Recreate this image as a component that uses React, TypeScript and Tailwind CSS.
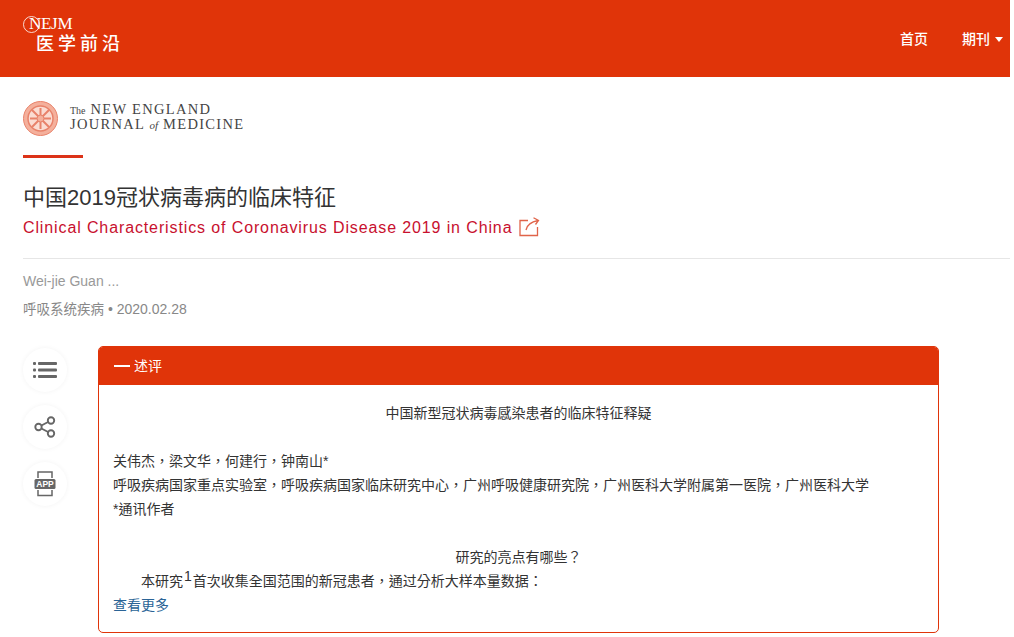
import React from 'react'

const sans = { fontFamily: '"Liberation Sans", "Noto Sans CJK SC", sans-serif' }

function SideButton({ children }: { children: React.ReactNode }) {
  return (
    <div className="w-[44px] h-[44px] rounded-full bg-white shadow-[0_0_5px_rgba(0,0,0,0.05)] flex items-center justify-center text-[#666]">
      {children}
    </div>
  )
}

export default function App() {
  return (
    <div className="w-[1014px] h-[637px] overflow-hidden bg-white text-[#333]" style={sans}>
      <header className="w-[1010px] h-[77px] bg-[#e03409] flex items-center justify-between pl-[23px] pr-[7px] text-white">
        <div className="pb-[11px]">
          <div className="flex items-center h-[18px]">
            <span className="w-[17px] h-[17px] rounded-full border border-white/80 shrink-0"></span>
            <span className="ml-[-11px] text-[17px] leading-[18px] font-['Liberation_Serif'] tracking-[-0.3px]">NEJM</span>
          </div>
          <div className="ml-[13px] text-[18px] leading-[18px] tracking-[4px] font-medium font-['Noto_Sans_CJK_SC']">医学前沿</div>
        </div>
        <nav className="flex items-center text-[14px] font-medium pt-[1px]">
          <span>首页</span>
          <span className="ml-[34px]">期刊</span>
          <span className="ml-[5px] w-0 h-0 border-x-[4.5px] border-x-transparent border-t-[5px] border-t-white"></span>
        </nav>
      </header>

      <main className="w-[1010px] pl-[23px]">
        <div className="flex items-center pt-[24px]">
          <svg width="35" height="35" viewBox="0 0 35 35" fill="none" stroke="#e8826a" className="shrink-0">
            <circle cx="17.5" cy="17.5" r="17" fill="#f4b09c" stroke="#e8826a" />
            <circle cx="17.5" cy="17.5" r="12.5" fill="#fbdcd2" strokeWidth="1.5" />
            <path d="M9 9 L26 26 M26 9 L9 26 M17.5 7 V28 M7 17.5 H28" strokeWidth="2" />
            <circle cx="17.5" cy="17.5" r="3.5" fill="#f4b09c" />
          </svg>
          <div className="ml-[12px] mb-[4px] font-['Liberation_Serif'] text-[#444] text-[14.5px] tracking-[1.3px] whitespace-nowrap">
            <div className="h-[15px] leading-[15px]"><span className="text-[10px] leading-none tracking-normal mr-[5px]">The</span>NEW ENGLAND</div>
            <div className="h-[15px] leading-[15px]">JOURNAL <span className="italic text-[11px] leading-none tracking-normal">of</span> MEDICINE</div>
          </div>
        </div>
        <div className="w-[60px] h-[3px] bg-[#dc3318] mt-[19px]"></div>

        <h1 className="mt-[24px] text-[22px] leading-[32px] text-[#333]">中国2019冠状病毒病的临床特征</h1>
        <div className="flex items-center text-[16px] leading-[26px] text-[#c8102e] mt-[1px]">
          <span className="tracking-[0.88px]">Clinical Characteristics of Coronavirus Disease 2019 in China</span>
          <svg width="22" height="20" viewBox="0 0 22 20" fill="none" stroke="#e0644a" strokeWidth="1.3" className="ml-[6px] mb-[3px]">
            <path d="M10 3.5 H2 V18.5 H19.5 V10" />
            <path d="M8 13 C9 8 12 5 20 3.5 M15.5 0.8 L20.5 3.5 L17.5 7.5" />
          </svg>
        </div>
        <div className="h-px bg-[#e6e6e6] mt-[17px]"></div>
        <div className="mt-[13px] text-[14px] leading-[18px] text-[#999]">Wei-jie Guan ...</div>
        <div className="mt-[10px] text-[14px] leading-[18px] text-[#888]">
          <span className="text-[13.5px]">呼吸系统疾病</span> • 2020.02.28
        </div>

        <div className="flex mt-[27px] items-start">
          <div className="flex flex-col gap-[13px] w-[75px] pt-[2px]">
            <SideButton>
              <svg width="24" height="18" viewBox="0 0 24 18" fill="currentColor">
                <rect x="0" y="1" width="3" height="3" rx="1" />
                <rect x="5" y="1" width="19" height="3" rx="1" />
                <rect x="0" y="7.5" width="3" height="3" rx="1" />
                <rect x="5" y="7.5" width="19" height="3" rx="1" />
                <rect x="0" y="14" width="3" height="3" rx="1" />
                <rect x="5" y="14" width="19" height="3" rx="1" />
              </svg>
            </SideButton>
            <SideButton>
              <svg width="22" height="22" viewBox="0 0 22 22" fill="none" stroke="currentColor" strokeWidth="1.9">
                <circle cx="4.5" cy="11" r="3.2" />
                <circle cx="17" cy="4.5" r="3.2" />
                <circle cx="17" cy="17.5" r="3.2" />
                <path d="M7.4 9.5 L14.1 6 M7.4 12.5 L14.1 16" />
              </svg>
            </SideButton>
            <SideButton>
              <svg width="22" height="26" viewBox="0 0 22 26" fill="none" stroke="currentColor" strokeWidth="1.5">
                <path d="M4 7 V1 H18 V7 M4 19 V24.5 H18 V19" />
                <rect x="0.5" y="8" width="21" height="10" rx="1.5" fill="currentColor" stroke="none" />
                <text x="11" y="16" textAnchor="middle" fontSize="8.5" fontWeight="700" fill="#fff" stroke="none" fontFamily="Liberation Sans">APP</text>
              </svg>
            </SideButton>
          </div>

          <section className="w-[841px] h-[287px] rounded-[5px] border border-[#e03409] overflow-hidden">
            <div className="h-[38px] bg-[#e03409] flex items-center pl-[15px] text-white text-[14px]">
              <span className="w-[16px] h-[2px] bg-white mr-[4px]"></span>
              <span>述评</span>
            </div>
            <div className="px-[14px] text-[14px] leading-[24px] text-[#333] font-['Liberation_Sans','Noto_Sans_CJK_TC',sans-serif]">
              <p className="text-center mt-[16px]">中国新型冠状病毒感染患者的临床特征释疑</p>
              <p className="mt-[24px]">关伟杰，梁文华，何建行，钟南山*</p>
              <p>呼吸疾病国家重点实验室，呼吸疾病国家临床研究中心，广州呼吸健康研究院，广州医科大学附属第一医院，广州医科大学</p>
              <p>*通讯作者</p>
              <p className="text-center mt-[24px]">研究的亮点有哪些？</p>
              <p className="pl-[28px]">本研究<sup className="text-[14px] align-baseline relative top-[-5px] mx-[1px]">1</sup>首次收集全国范围的新冠患者，通过分析大样本量数据：</p>
              <p className="text-[#2a6496]">查看更多</p>
            </div>
          </section>
        </div>
      </main>
    </div>
  )
}
